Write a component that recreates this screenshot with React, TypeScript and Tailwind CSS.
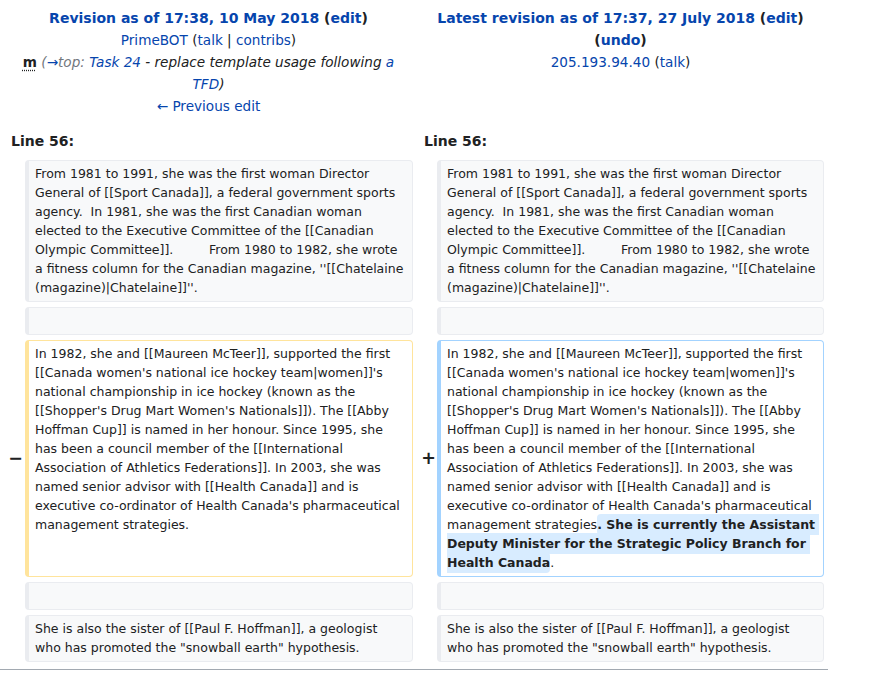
import React from "react";

const L = "text-[#0645ad]";
const D = "text-[#202122]";

function Box({ kind, children }: { kind: "ctx" | "del" | "add"; children?: React.ReactNode }) {
  const cls =
    kind === "ctx"
      ? "bg-[#f8f9fa] border-[#eaecf0]"
      : kind === "del"
      ? "bg-white border-[#ffe49c]"
      : "bg-white border-[#a3d3ff]";
  return (
    <div
      className={`border border-l-4 rounded-[4px] ${cls} pt-[3px] pb-[4px] pl-[6px] pr-[6px] text-[12.5px] leading-[19px] text-[#202122] whitespace-pre-wrap break-words`}
    >
      {children ?? "\u00a0"}
    </div>
  );
}

function Marker({ sign, shift }: { sign?: string; shift?: "l" | "r" }) {
  return (
    <div className="flex items-center justify-end text-[17.5px] font-bold leading-[21px] text-[#202122]">
      <span className={shift === "r" ? "-mr-[3px]" : "-mr-[2px]"}>{sign ?? ""}</span>
    </div>
  );
}

const p1 =
  "From 1981 to 1991, she was the first woman Director General of [[Sport Canada]], a federal government sports agency.  In 1981, she was the first Canadian woman elected to the Executive Committee of the [[Canadian Olympic Committee]].         From 1980 to 1982, she wrote a fitness column for the Canadian magazine, ''[[Chatelaine (magazine)|Chatelaine]]''.";

const p2 =
  "In 1982, she and [[Maureen McTeer]], supported the first [[Canada women's national ice hockey team|women]]'s national championship in ice hockey (known as the [[Shopper's Drug Mart Women's Nationals]]). The [[Abby Hoffman Cup]] is named in her honour. Since 1995, she has been a council member of the [[International Association of Athletics Federations]]. In 2003, she was named senior advisor with [[Health Canada]] and is executive co-ordinator of Health Canada's pharmaceutical management strategies";

const p3 =
  'She is also the sister of [[Paul F. Hoffman]], a geologist who has promoted the "snowball earth" hypothesis.';

export default function App() {
  return (
    <div className="w-[874px] h-[686px] bg-white overflow-hidden font-['DejaVu_Sans',sans-serif] text-[#202122]">
      {/* header */}
      <div className="w-[828px] px-[4px] pt-[7px] grid grid-cols-[17px_388px_16px_387px] gap-x-[4px] text-[13.6px] leading-[22px]">
        <div className="col-span-2 text-center">
          <div className="font-bold text-[14px]">
            <a className={L}>Revision as of 17:38, 10 May 2018</a> <span className={D}>(</span>
            <a className={L}>edit</a>
            <span className={D}>)</span>
          </div>
          <div>
            <a className={L}>PrimeBOT</a> <span className={D}>(</span>
            <a className={L}>talk</a>
            <span className={D}> | </span>
            <a className={L}>contribs</a>
            <span className={D}>)</span>
          </div>
          <div>
            <span className="font-bold underline decoration-dotted underline-offset-[3px]">m</span>{" "}
            <i>
              <span className="text-[#72777d]">(</span>
              <a className={L}>→</a>
              <span className="text-[#72777d]">top: </span>
              <a className={L}>Task 24</a>
              <span className={D}> - replace template usage following </span>
              <a className={L}>a</a>
              <br />
              <a className={L}>TFD</a>
              <span className={D}>)</span>
            </i>
          </div>
          <div>
            <a className={L}>← Previous edit</a>
          </div>
        </div>
        <div className="col-span-2 text-center">
          <div className="font-bold text-[14px]">
            <a className={L}>Latest revision as of 17:37, 27 July 2018</a> <span className={D}>(</span>
            <a className={L}>edit</a>
            <span className={D}>)</span>
          </div>
          <div className="font-bold text-[14px]">
            <span className={D}>(</span>
            <a className={L}>undo</a>
            <span className={D}>)</span>
          </div>
          <div>
            <a className={L}>205.193.94.40</a> <span className={D}>(</span>
            <a className={L}>talk</a>
            <span className={D}>)</span>
          </div>
        </div>
        <div className="col-span-2 mt-[13px] pl-[7px] font-bold text-[14px]">Line 56:</div>
        <div className="col-span-2 mt-[13px] pl-[7px] font-bold text-[14px]">Line 56:</div>
      </div>

      {/* diff rows */}
      <div className="w-[828px] px-[4px] mt-[8px] grid grid-cols-[17px_388px_16px_387px] gap-x-[4px] gap-y-[5px]">
        <Marker />
        <Box kind="ctx">{p1}</Box>
        <Marker />
        <Box kind="ctx">{p1}</Box>

        <Marker />
        <Box kind="ctx" />
        <Marker />
        <Box kind="ctx" />

        <Marker sign="−" shift="l" />
        <Box kind="del">{p2 + "."}</Box>
        <Marker sign="+" shift="r" />
        <Box kind="add">
          {p2}
          <span className="font-bold bg-[#d8ecff] rounded-[4px] py-[3px]">
            . She is currently the Assistant Deputy Minister for the Strategic Policy Branch for Health Canada
          </span>
          .
        </Box>

        <Marker />
        <Box kind="ctx" />
        <Marker />
        <Box kind="ctx" />

        <Marker />
        <Box kind="ctx">{p3}</Box>
        <Marker />
        <Box kind="ctx">{p3}</Box>
      </div>
      <div className="w-[828px] h-px bg-[#a2a9b1] mt-[7px]" />
    </div>
  );
}
